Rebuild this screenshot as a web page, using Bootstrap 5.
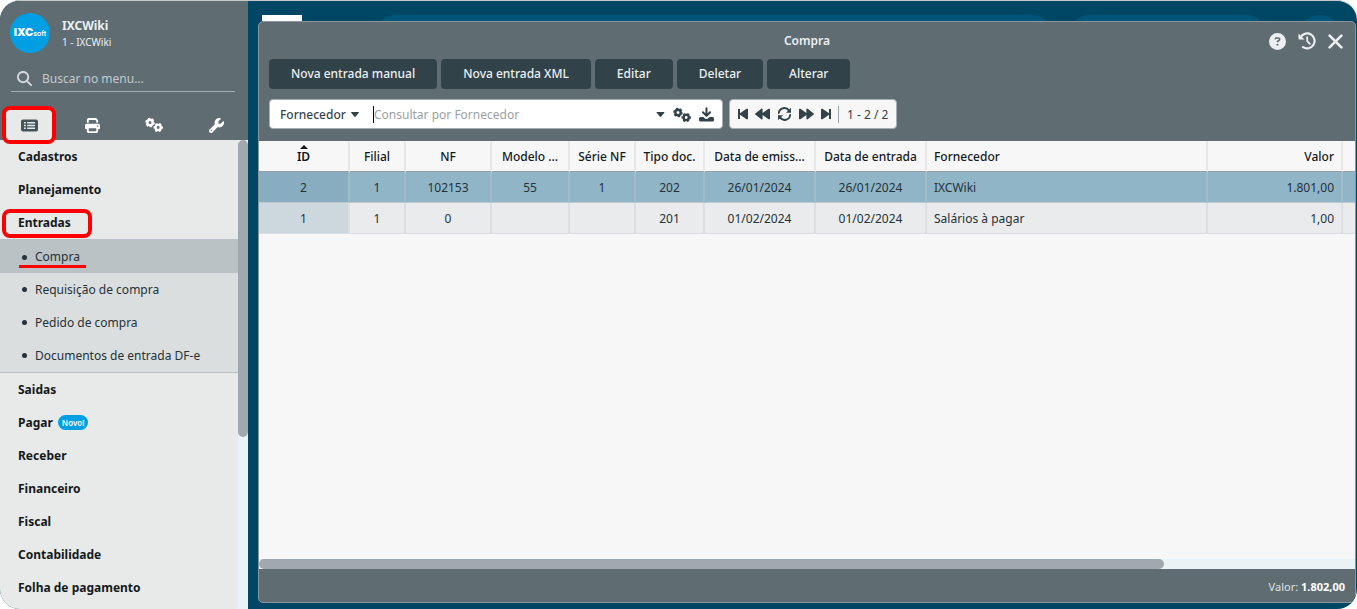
<!DOCTYPE html>
<html lang="pt-BR">
<head>
<meta charset="utf-8">
<meta name="viewport" content="width=device-width, initial-scale=1">
<title>IXCWiki - Compra</title>
<link href="https://cdn.jsdelivr.net/npm/bootstrap@5.3.0/dist/css/bootstrap.min.css" rel="stylesheet">
<style>
:root{--slate:#5f6c72;--dark:#314249;--ink:#263238;--sky:#009ee3;--thumb:#a1a9af;--track:#e9f2f5;--alert:#ff0000}
body{font-family:"Noto Sans",sans-serif;font-size:12px;line-height:18px;color:var(--ink);background:#fff}
.app{height:100vh;border-top:1px solid #c5c9c9;border-radius:20px;background:#004766}
.fs-mini{font-size:10px;line-height:14px}
svg{display:block;fill:currentColor}
/* sidebar */
.side{width:248px}
.side-head{background:var(--slate);color:#eceff1;height:139px}
.account{padding:12px 10px 11px;gap:12px}
.logo{width:40px;height:40px;background:var(--sky);color:#fff;font-family:Inter,sans-serif;font-weight:900;font-size:11px;line-height:12px}
.logo small{font-size:7px;font-weight:600}
.user-name{font-weight:700;line-height:18px}
.search{border-bottom:1px solid #a5aeb2;margin:0 13px 0 11px;padding:2px 4px 0 6px;gap:10px;height:28px;color:#d5dadc}
.search input,.query input{border:0;background:none;outline:0;min-width:0}
.search input::placeholder{color:#c4cacd;opacity:1}
.tabs{height:34px}
.tabs button{border:0;background:none;color:#fff;width:62px;padding:4px 0 0 2px}
.tabs button.on{background:#e7eae9;color:#45535a;width:54px;height:38px;margin:0 4px 0 2px;padding:0;border:4px solid var(--alert);border-radius:8px;z-index:1}
.side-list{background:#e7eae9}
.menu-item{display:flex;align-items:center;height:33px;padding-left:18px;color:#15191c;font-weight:700;text-decoration:none}
.menu-item.marked{height:29px;margin:3px 0 1px 2px;padding:0 0 2px 12px;width:90px;border:4px solid var(--alert);border-radius:8px}
.sub{background:#dadedf;border-bottom:1px solid #b9bfc2}
.sub a{display:flex;align-items:center;height:33px;padding-left:22px;gap:8px;color:var(--ink);text-decoration:none}
.sub a::before{content:"";width:5px;height:5px;border-radius:50%;background:var(--ink)}
.sub a.on{background:#bbc2c5;height:34px;padding-top:2px;position:relative}
.sub a.on::after{content:"";position:absolute;left:19px;bottom:5px;width:67px;height:3px;background:var(--alert)}
.pill{background:var(--sky);color:#fff;font-size:8px;line-height:15px;font-weight:600;padding:0 4px;border-radius:8px;margin-left:5px}
.v-track{width:10px;background:var(--track)}
.v-thumb{height:297px;background:var(--thumb);border-radius:5px}
/* desktop behind the window */
.desk{padding:14px 1px 6px 10px;min-width:0}
.strip{height:6px;padding:0 16px 0 4px}
.strip i{background:#00557a;border-radius:20px;height:40px}
.strip .sheet{background:#fff;border-radius:0;width:40px;margin-right:73px}
.strip .pod{width:196px;margin:0 34px 0 18px}
.strip .dot{width:40px}
/* window */
.win{background:var(--slate);border:1px solid #8b9599;border-radius:5px;min-height:0}
.win-head{height:37px;color:#eceff1;padding:1px 12px 0 86px}
.win-head h1{font-size:12px;line-height:18px;font-weight:600}
.win-tools{width:74px}
.icon-btn{border:0;background:none;padding:0;color:inherit}
.actions{gap:4px;padding:0 10px 10px}
.act{height:30px;background:var(--dark);color:#eceff1;border:0;border-radius:4px;padding:0 22px;font-weight:500}
.finder{gap:6px;padding:0 10px 12px}
.field{height:30px;border:1px solid #a5aeb2;border-radius:4px;background:#fff;color:var(--dark)}
.query{width:454px;padding:1px 8px 0 10px}
.query label{gap:3px;margin-right:14px}
.query select{appearance:none;border:0;background:none;font-weight:500;width:68px;padding:0;color:#37444a}
.query input{height:17px;border-left:1px solid #000;padding:0}
.query input::placeholder{color:#9b9fa2;opacity:1}
.pager{background:#f7f7f7;gap:7px}
.pager .count{border-left:1px solid #9da5a9;line-height:17px;padding-left:8px}
.grid-area{background:#f7f7f7}
.grid{table-layout:fixed;width:100%;border-collapse:separate;border-spacing:0}
.grid th,.grid td{height:31px;padding:1px 7px 0;text-align:center;overflow:hidden;white-space:nowrap;text-overflow:ellipsis;border-right:2px solid #dcdfe0}
.grid th{color:#15191c;font-weight:500;border-right-color:#e6e8e9;border-bottom:1px solid #959da5}
.grid td{background:#e9ebec;border-bottom:1px solid #dcdfe1}
.grid td:first-child{background:#cdd8de}
.grid tr.sel td{background:#8fb5c7;border-bottom-color:#bfc9cf;border-right-color:#a0bcc8}
.grid tr.sel td:first-child{background:#88adc0}
.grid th.sort{font-weight:600;position:relative}
.grid th.sort::before{content:"";position:absolute;top:4px;left:calc(50% - 4px);border:4px solid transparent;border-top:0;border-bottom-color:#15191c}
.grid .txt{text-align:left}
.grid .num{text-align:right}
.grid tr>:last-child{border-right:0}
.h-track{height:10px;background:var(--track)}
.h-thumb{height:10px;background:var(--thumb);border-radius:5px}
.win-foot{height:33px;color:#dfe3e5;font-size:11px;padding:2px 10px 0}
</style>
</head>
<body>
<svg class="d-none" aria-hidden="true">
  <symbol id="gears" viewBox="0 0 18 16"><g fill="none" stroke="currentColor">
    <circle cx="5" cy="5.500" r="2.700" stroke-width="2.400"/><circle cx="5" cy="5.500" r="4.100" stroke-width="1.400" pathLength="12" stroke-dasharray="1.100 .9"/>
    <circle cx="13.200" cy="10.500" r="2.600" stroke-width="2.400"/><circle cx="13.200" cy="10.500" r="4" stroke-width="1.400" pathLength="12" stroke-dasharray="1.100 .9" stroke-dashoffset=".5"/></g></symbol>
</svg>
<div class="app d-flex overflow-hidden">
  <aside class="side d-flex flex-column flex-shrink-0">
    <header class="side-head d-flex flex-column flex-shrink-0">
      <div class="account d-flex align-items-center">
        <div class="logo rounded-circle d-flex align-items-center justify-content-center"><span>IXC<small>soft</small></span></div>
        <div><div class="user-name">IXCWiki</div><div class="fs-mini">1 - IXCWiki</div></div>
      </div>
      <label class="search d-flex align-items-center">
        <svg width="15" height="15" viewBox="0 0 512 512"><path d="M416 208c0 45.900-14.900 88.300-40 122.700L502.600 457.400c12.500 12.500 12.500 32.800 0 45.300s-32.800 12.500-45.300 0L330.700 376c-34.400 25.200-76.800 40-122.700 40C93.100 416 0 322.900 0 208S93.100 0 208 0S416 93.100 416 208zM208 352a144 144 0 1 0 0-288 144 144 0 1 0 0 288z"/></svg>
        <input class="flex-fill p-0" type="text" placeholder="Buscar no menu..." aria-label="Buscar no menu">
      </label>
      <nav class="tabs d-flex mt-auto">
        <button class="on d-flex align-items-center justify-content-center" aria-label="Menu"><svg width="17" height="13" viewBox="0 0 17 13"><path fill-rule="evenodd" d="M2 .5h13a2 2 0 0 1 2 2v8a2 2 0 0 1-2 2H2a2 2 0 0 1-2-2v-8a2 2 0 0 1 2-2zM3 3v1.600h1.800V3zM6.200 3v1.400H14V3zM3 5.700v1.600h1.800V5.700zM6.200 5.800v1.400H14V5.800zM3 8.500v1.600h1.800V8.500zM6.200 8.600V10H14V8.600z"/></svg></button>
        <button class="d-flex align-items-center justify-content-center" aria-label="Imprimir"><svg width="15" height="15" viewBox="0 0 512 512"><path d="M128 0C92.700 0 64 28.700 64 64v96h64V64H354.700L384 93.300V160h64V93.300c0-17-6.700-33.300-18.700-45.300L400 18.700C388 6.700 371.700 0 354.700 0H128zM384 352v96H128V352H384zm64 32h32c17.700 0 32-14.300 32-32V256c0-35.300-28.700-64-64-64H64c-35.300 0-64 28.700-64 64v96c0 17.700 14.300 32 32 32H64v64c0 35.300 28.700 64 64 64H384c35.300 0 64-28.700 64-64V384zM432 248a24 24 0 1 1 0 48 24 24 0 1 1 0-48z"/></svg></button>
        <button class="d-flex align-items-center justify-content-center" aria-label="Configurações"><svg width="18" height="16"><use href="#gears"/></svg></button>
        <button class="d-flex align-items-center justify-content-center" aria-label="Ferramentas"><svg width="15" height="15" viewBox="0 0 512 512"><path d="M352 320c88.400 0 160-71.600 160-160c0-15.300-2.200-30.100-6.200-44.200c-3.100-10.800-16.400-13.200-24.300-5.300l-76.800 76.800c-3 3-7.100 4.700-11.300 4.700H336c-8.800 0-16-7.200-16-16V118.600c0-4.200 1.700-8.300 4.700-11.300l76.800-76.800c7.900-7.900 5.400-21.200-5.300-24.300C382.100 2.200 367.300 0 352 0C263.600 0 192 71.600 192 160c0 19.100 3.400 37.500 9.500 54.500L19.900 396.100C7.200 408.800 0 426.100 0 444.100C0 481.600 30.400 512 67.900 512c18 0 35.300-7.200 48-19.900L297.500 310.500c17 6.200 35.400 9.500 54.500 9.500zM80 408a24 24 0 1 1 0 48 24 24 0 1 1 0-48z"/></svg></button>
      </nav>
    </header>
    <div class="d-flex flex-fill overflow-hidden">
      <nav class="side-list flex-fill">
        <a class="menu-item" href="#">Cadastros</a>
        <a class="menu-item" href="#">Planejamento</a>
        <a class="menu-item marked" href="#">Entradas</a>
        <div class="sub">
          <a class="on" href="#">Compra</a>
          <a href="#">Requisição de compra</a>
          <a href="#">Pedido de compra</a>
          <a href="#">Documentos de entrada DF-e</a>
        </div>
        <a class="menu-item" href="#">Saidas</a>
        <a class="menu-item" href="#">Pagar <span class="pill">Novo!</span></a>
        <a class="menu-item" href="#">Receber</a>
        <a class="menu-item" href="#">Financeiro</a>
        <a class="menu-item" href="#">Fiscal</a>
        <a class="menu-item" href="#">Contabilidade</a>
        <a class="menu-item" href="#">Folha de pagamento</a>
      </nav>
      <div class="v-track flex-shrink-0"><div class="v-thumb"></div></div>
    </div>
  </aside>

  <main class="desk d-flex flex-column flex-fill">
    <div class="strip d-flex flex-shrink-0 overflow-hidden"><i class="sheet"></i><i class="flex-fill"></i><i class="pod"></i><i class="dot"></i></div>
    <section class="win d-flex flex-column flex-fill overflow-hidden">
      <header class="win-head d-flex align-items-center flex-shrink-0">
        <h1 class="flex-fill text-center m-0">Compra</h1>
        <div class="win-tools d-flex align-items-center justify-content-between">
          <button class="icon-btn" aria-label="Ajuda"><svg width="17" height="17" viewBox="0 0 512 512"><path fill-rule="evenodd" d="M256 512A256 256 0 1 0 256 0a256 256 0 1 0 0 512zM169.800 165.300c7.900-22.300 29.100-37.300 52.800-37.300h58.300c34.900 0 63.100 28.300 63.100 63.100c0 22.600-12.100 43.500-31.700 54.800L280 264.400c-.2 13-10.900 23.600-24 23.600c-13.300 0-24-10.700-24-24V250.500c0-8.600 4.600-16.500 12.100-20.800l44.300-25.400c4.700-2.700 7.600-7.700 7.600-13.100c0-8.400-6.800-15.100-15.100-15.100H222.600c-3.400 0-6.400 2.100-7.500 5.300l-.4 1.200c-4.400 12.500-18.200 19-30.600 14.600s-19-18.200-14.600-30.600zM224 352a32 32 0 1 1 64 0 32 32 0 1 1-64 0z"/></svg></button>
          <button class="icon-btn" aria-label="Histórico"><svg width="18" height="18" viewBox="0 0 18 18"><g fill="none" stroke="currentColor" stroke-width="2.200" stroke-linecap="round" stroke-linejoin="round"><path d="M2.800 4.800A7.500 7.500 0 1 1 5 15.200"/><path d="M9.200 5.200v4l2.600 2.600" stroke-width="1.800"/></g><path d="M.5 1.600v5.200c0 .5.300.8.800.8h5.200z"/></svg></button>
          <button class="icon-btn" aria-label="Fechar"><svg width="15" height="15" viewBox="0 0 15 15"><path d="M1.600 1.600l11.800 11.800M13.400 1.600L1.600 13.400" stroke="currentColor" stroke-width="2.600" stroke-linecap="round"/></svg></button>
        </div>
      </header>
      <div class="actions d-flex flex-shrink-0">
        <button class="act">Nova entrada manual</button>
        <button class="act">Nova entrada XML</button>
        <button class="act">Editar</button>
        <button class="act">Deletar</button>
        <button class="act">Alterar</button>
      </div>
      <div class="finder d-flex flex-shrink-0">
        <div class="field query d-flex align-items-center">
          <label class="d-flex align-items-center">
            <select aria-label="Campo de busca"><option>Fornecedor</option></select>
            <svg width="8" height="5" viewBox="0 0 8 5"><path d="M.5 0h7q.8.300.3.800L4.500 4.700q-.5.500-1 0L.2.800Q-.3.300.5 0z"/></svg>
          </label>
          <input class="flex-fill" type="text" placeholder="Consultar por Fornecedor" aria-label="Consultar por Fornecedor">
          <div class="d-flex align-items-center gap-2">
            <button class="icon-btn" aria-label="Opções"><svg width="9" height="5" viewBox="0 0 8 5"><path d="M.5 0h7q.8.300.3.800L4.500 4.700q-.5.500-1 0L.2.800Q-.3.300.5 0z"/></svg></button>
            <button class="icon-btn" aria-label="Configurar"><svg width="18" height="16"><use href="#gears"/></svg></button>
            <button class="icon-btn" aria-label="Baixar"><svg width="15" height="15" viewBox="0 0 15 15"><path d="M7.500 1.200v7M3.900 5.300l3.600 3.600 3.600-3.600" fill="none" stroke="currentColor" stroke-width="2" stroke-linecap="round" stroke-linejoin="round"/><path d="M1.500 10h2.900l1.700 1.500q1.400 1 2.800 0L10.600 10h2.900a1.500 1.500 0 0 1 1.500 1.500v1.500a1.500 1.500 0 0 1-1.500 1.500h-12A1.500 1.500 0 0 1 0 13v-1.500A1.500 1.500 0 0 1 1.500 10z"/></svg></button>
          </div>
        </div>
        <div class="field pager d-flex align-items-center px-2">
          <button class="icon-btn" aria-label="Primeira"><svg width="10" height="12" viewBox="0 0 10 12"><path d="M0 1h2v4.300L8.500.8Q9.800.3 10 1.500v9q-.2 1.200-1.500.7L2 6.700V11H0z"/></svg></button>
          <button class="icon-btn" aria-label="Anterior"><svg width="15" height="12" viewBox="0 0 15 12"><path d="M.3 5.400L6.300.8Q7.300.3 7.600 1.200v3.700L13.600.8Q14.700.300 15 1.300v9.400q-.3 1-1.400.5L7.600 7.100v3.700q-.3.900-1.300.4L.3 6.600Q-.2 6 .3 5.400z"/></svg></button>
          <button class="icon-btn" aria-label="Atualizar"><svg width="15" height="14" viewBox="0 0 15 14"><g fill="none" stroke="currentColor" stroke-width="1.900" stroke-linecap="round"><path d="M1.800 6A5.600 5.600 0 0 1 12 3.600"/><path d="M13.200 8A5.600 5.600 0 0 1 3 10.400"/></g><path d="M14 .8v5H9zM1 13.200v-5h5z"/></svg></button>
          <button class="icon-btn" aria-label="Próxima"><svg width="15" height="12" viewBox="0 0 15 12"><path transform="matrix(-1 0 0 1 15 0)" d="M.3 5.400L6.300.8Q7.300.3 7.600 1.200v3.700L13.600.8Q14.700.300 15 1.300v9.400q-.3 1-1.400.5L7.600 7.100v3.700q-.3.900-1.300.4L.3 6.600Q-.2 6 .3 5.400z"/></svg></button>
          <button class="icon-btn" aria-label="Última"><svg width="10" height="12" viewBox="0 0 10 12"><path transform="matrix(-1 0 0 1 10 0)" d="M0 1h2v4.300L8.500.8Q9.800.3 10 1.500v9q-.2 1.200-1.500.7L2 6.700V11H0z"/></svg></button>
          <span class="count">1 - 2 / 2</span>
        </div>
      </div>
      <div class="grid-area flex-fill overflow-hidden">
        <table class="grid">
          <colgroup><col style="width:91px"><col style="width:56px"><col style="width:86px"><col style="width:78px"><col style="width:66px"><col style="width:69px"><col style="width:111px"><col style="width:111px"><col><col style="width:135px"><col style="width:12px"></colgroup>
          <thead><tr><th class="sort">ID</th><th>Filial</th><th>NF</th><th>Modelo ...</th><th>Série NF</th><th>Tipo doc.</th><th>Data de emiss...</th><th>Data de entrada</th><th class="txt">Fornecedor</th><th class="num">Valor</th><th class="p-0"></th></tr></thead>
          <tbody>
            <tr class="sel"><td>2</td><td>1</td><td>102153</td><td>55</td><td>1</td><td>202</td><td>26/01/2024</td><td>26/01/2024</td><td class="txt">IXCWiki</td><td class="num">1.801,00</td><td class="p-0"></td></tr>
            <tr><td>1</td><td>1</td><td>0</td><td></td><td></td><td>201</td><td>01/02/2024</td><td>01/02/2024</td><td class="txt">Salários à pagar</td><td class="num">1,00</td><td class="p-0"></td></tr>
          </tbody>
        </table>
      </div>
      <div class="h-track flex-shrink-0"><div class="h-thumb" style="width:82.6%"></div></div>
      <footer class="win-foot d-flex align-items-center justify-content-end flex-shrink-0"><span>Valor: <b class="text-white">1.802,00</b></span></footer>
    </section>
  </main>
</div>
<script src="https://cdn.jsdelivr.net/npm/bootstrap@5.3.0/dist/js/bootstrap.bundle.min.js"></script>
</body>
</html>
